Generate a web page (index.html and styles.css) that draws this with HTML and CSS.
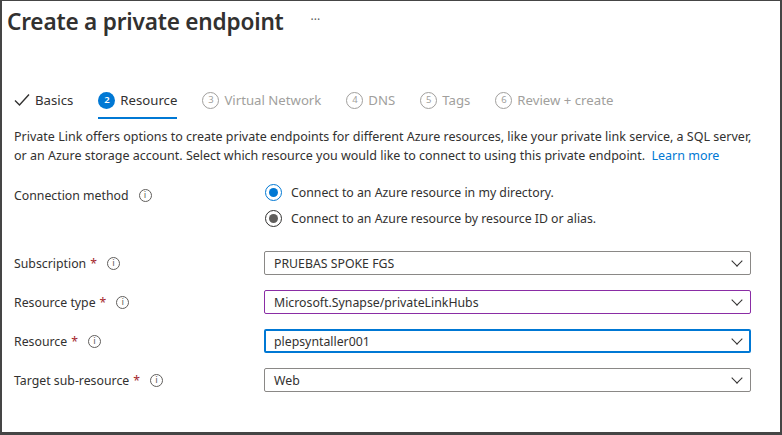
FILE: index.html
```html
<!DOCTYPE html>
<html lang="en">
<head>
<meta charset="utf-8">
<title>Create a private endpoint</title>
<link rel="stylesheet" href="styles.css">
</head>
<body>
<div class="frame">
  <header class="header">
    <h1 class="title">Create a private endpoint</h1>
    <span class="more">···</span>
  </header>

  <nav class="tabs">
    <div class="tab done">
      <svg class="check" width="16" height="14" viewBox="0 0 16 14"><path d="M1 7.5 L5.5 12 L15 1.5" fill="none" stroke="#323130" stroke-width="1.4"/></svg>
      <span>Basics</span>
    </div>
    <div class="tab active"><span class="num">2</span><span>Resource</span></div>
    <div class="tab off"><span class="num">3</span><span>Virtual Network</span></div>
    <div class="tab off"><span class="num">4</span><span>DNS</span></div>
    <div class="tab off"><span class="num">5</span><span>Tags</span></div>
    <div class="tab off"><span class="num">6</span><span>Review + create</span></div>
  </nav>

  <p class="desc">Private Link offers options to create private endpoints for different Azure resources, like your private link service, a SQL server, or an Azure storage account. Select which resource you would like to connect to using this private endpoint. <a class="link" href="#">Learn more</a></p>

  <div class="form">
    <div class="label conn">Connection method <span class="info">i</span></div>
    <div class="radios">
      <label class="radio"><span class="dot on"></span>Connect to an Azure resource in my directory.</label>
      <label class="radio"><span class="dot alt"></span>Connect to an Azure resource by resource ID or alias.</label>
    </div>

    <div class="label">Subscription <span class="req">*</span> <span class="info">i</span></div>
    <div class="select">PRUEBAS SPOKE FGS<span class="chev"></span></div>

    <div class="label">Resource type <span class="req">*</span> <span class="info">i</span></div>
    <div class="select purple">Microsoft.Synapse/privateLinkHubs<span class="chev"></span></div>

    <div class="label">Resource <span class="req">*</span> <span class="info">i</span></div>
    <div class="select focus">plepsyntaller001<span class="chev"></span></div>

    <div class="label">Target sub-resource <span class="req">*</span> <span class="info">i</span></div>
    <div class="select">Web<span class="chev"></span></div>
  </div>
</div>
</body>
</html>
```

FILE: styles.css
```css
* { box-sizing: border-box; }
html, body { margin: 0; padding: 0; background: #fff; }
body {
  font-family: "Noto Sans", "Open Sans", sans-serif;
  color: #323130;
}
.frame {
  width: 782px;
  height: 435px;
  border-left: 2px solid #454545;
  border-top: 1px solid #454545;
  border-right: 2px solid #454545;
  border-bottom: 3px solid #454545;
  overflow: hidden;
}
.header {
  display: flex;
  align-items: center;
  height: 40px;
  padding-left: 5px;
}
.title {
  margin: 0;
  font-size: 22.6px;
  font-weight: 600;
  color: #323130;
  letter-spacing: -0.2px;
}
.more {
  margin-left: 27px;
  font-size: 12px;
  color: #605e5c;
  position: relative;
  top: -2px;
}
.tabs {
  display: flex;
  margin-top: 42px;
  padding-left: 12px;
  gap: 25px;
  font-size: 13.2px;
}
.tab {
  display: flex;
  align-items: center;
  gap: 5px;
  height: 36px;
  border-bottom: 2px solid transparent;
  white-space: nowrap;
}
.tab.active { border-bottom-color: #0078d4; color: #323130; }
.tab.off { color: #a19f9d; }
.num {
  width: 17px;
  height: 17px;
  border-radius: 50%;
  display: inline-flex;
  align-items: center;
  justify-content: center;
  font-size: 9.5px;
  line-height: 1;
}
.active .num { background: #0078d4; color: #fff; font-weight: 600; }
.off .num { border: 1px solid #a19f9d; color: #a19f9d; }
.desc {
  margin: 8px 0 0 12px;
  width: 742px;
  font-size: 12.5px;
  line-height: 19px;
}
.link { color: #0078d4; text-decoration: none; margin-left: 3px; }
.form {
  display: grid;
  grid-template-columns: 250px 487px;
  row-gap: 15px;
  padding-left: 12px;
  margin-top: 14px;
  font-size: 12.3px;
}
.label {
  display: flex;
  align-items: center;
  gap: 5px;
  height: 24px;
  white-space: nowrap;
}
.label.conn { height: 26px; align-self: start; gap: 10px; padding-top: 6px; }
.req { color: #a4262c; margin-left: -1px; margin-right: 5px; }
.info {
  width: 13px;
  height: 13px;
  border: 1px solid #605e5c;
  border-radius: 50%;
  display: inline-flex;
  align-items: center;
  justify-content: center;
  font-size: 9px;
  color: #605e5c;
  font-family: "DejaVu Sans", sans-serif;
  line-height: 1;
}
.radios { display: flex; flex-direction: column; margin-bottom: 5px; }
.radio {
  display: flex;
  align-items: center;
  gap: 9px;
  height: 26px;
}
.dot {
  width: 17px;
  height: 17px;
  border-radius: 50%;
  border: 1px solid #0078d4;
  display: inline-flex;
  align-items: center;
  justify-content: center;
  margin-left: 1px;
}
.dot::after {
  content: "";
  width: 9px;
  height: 9px;
  border-radius: 50%;
  background: #0078d4;
}
.dot.alt { border-color: #323130; }
.dot.alt::after { background: #605e5c; }
.select {
  position: relative;
  height: 24px;
  border: 1px solid #8a8886;
  border-radius: 2px;
  display: flex;
  align-items: center;
  padding-left: 9px;
  color: #323130;
}
.select.purple { border-color: #8a2da5; }
.select.focus { border: 2px solid #0078d4; padding-left: 8px; }
.chev {
  position: absolute;
  right: 9px;
  top: 5px;
  width: 8px;
  height: 8px;
  border-right: 1px solid #323130;
  border-bottom: 1px solid #323130;
  transform: rotate(45deg);
}
.select.focus .chev { right: 8px; top: 4px; }
```
